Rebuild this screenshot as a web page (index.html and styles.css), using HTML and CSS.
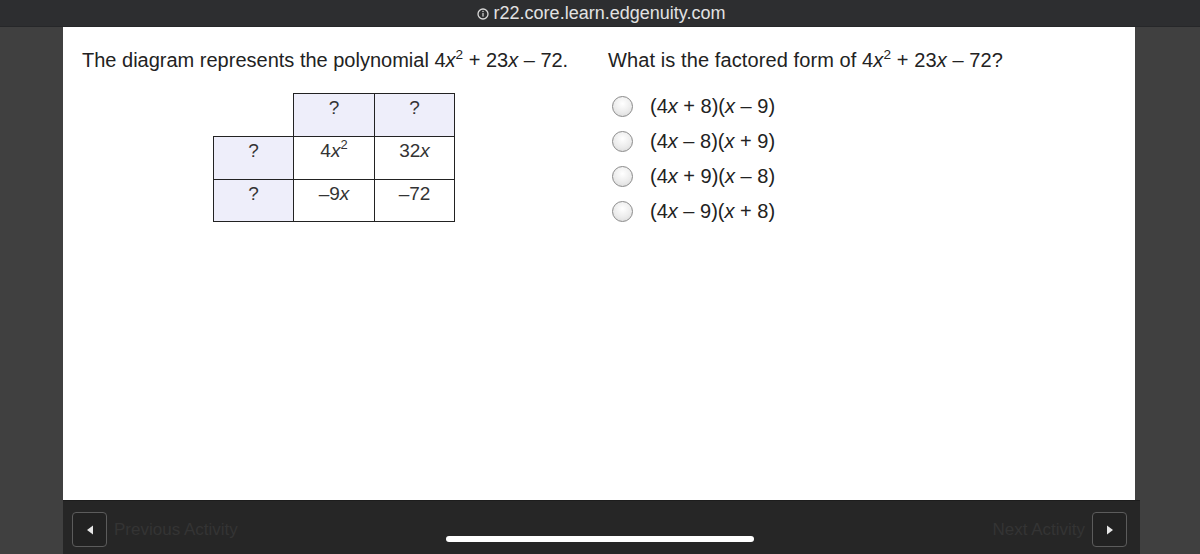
FILE: index.html
```html
<!DOCTYPE html>
<html>
<head>
<meta charset="utf-8">
<link rel="stylesheet" href="styles.css">
</head>
<body>
<div class="topbar">
  <span class="info-icon">
    <svg width="12" height="12" viewBox="0 0 12 12"><circle cx="6" cy="6" r="5" fill="none" stroke="#d8d8d8" stroke-width="1.3"/><rect x="5.4" y="5" width="1.2" height="3.6" fill="#d8d8d8"/><circle cx="6" cy="3.5" r="0.75" fill="#d8d8d8"/></svg>
  </span>
  <span class="url">r22.core.learn.edgenuity.com</span>
</div>
<div class="main">
  <div class="side"></div>
  <div class="center">
    <div class="content">
      <div class="left-col">
        <p class="prompt">The diagram represents the polynomial 4<i>x</i><sup>2</sup> + 23<i>x</i> – 72.</p>
        <div class="grid">
          <div class="cell empty"></div>
          <div class="cell head">?</div>
          <div class="cell head">?</div>
          <div class="cell head">?</div>
          <div class="cell">4<i>x</i><sup>2</sup></div>
          <div class="cell">32<i>x</i></div>
          <div class="cell head">?</div>
          <div class="cell">–9<i>x</i></div>
          <div class="cell">–72</div>
        </div>
      </div>
      <div class="right-col">
        <p class="prompt">What is the factored form of 4<i>x</i><sup>2</sup> + 23<i>x</i> – 72?</p>
        <ul class="options">
          <li><span class="radio"></span><span class="opt">(4<i>x</i> + 8)(<i>x</i> – 9)</span></li>
          <li><span class="radio"></span><span class="opt">(4<i>x</i> – 8)(<i>x</i> + 9)</span></li>
          <li><span class="radio"></span><span class="opt">(4<i>x</i> + 9)(<i>x</i> – 8)</span></li>
          <li><span class="radio"></span><span class="opt">(4<i>x</i> – 9)(<i>x</i> + 8)</span></li>
        </ul>
      </div>
    </div>
    <div class="footer">
      <div class="nav">
        <span class="navbtn"><svg width="8" height="10" viewBox="0 0 8 10"><path d="M7 0.5 L1 5 L7 9.5 Z" fill="#e6e6e6"/></svg></span>
        <span class="navtext">Previous Activity</span>
      </div>
      <div class="nav">
        <span class="navtext">Next Activity</span>
        <span class="navbtn"><svg width="8" height="10" viewBox="0 0 8 10"><path d="M1 0.5 L7 5 L1 9.5 Z" fill="#e6e6e6"/></svg></span>
      </div>
      <div class="home-indicator"></div>
    </div>
  </div>
  <div class="side right"></div>
</div>
</body>
</html>
```
FILE: styles.css
```css
* { box-sizing: border-box; }
html, body { margin: 0; padding: 0; }
body {
  width: 1200px;
  height: 554px;
  overflow: hidden;
  background: #414141;
  font-family: "Liberation Sans", Arial, sans-serif;
}
.topbar {
  height: 27px;
  background: #2d2e30;
  border-bottom: 1px solid #262729;
  display: flex;
  align-items: center;
  justify-content: center;
  gap: 5px;
  color: #e2e2e2;
  font-size: 18px;
  padding-left: 2px;
}
.info-icon { display: flex; align-items: center; margin-top: 1px; }
.main {
  display: flex;
  height: 527px;
}
.side {
  width: 63px;
  background: #404040;
}
.side.right { width: 60px; }
.center {
  flex: 1;
  display: flex;
  flex-direction: column;
}
.content {
  height: 473px;
  background: #ffffff;
  margin-right: 5px;
  display: flex;
  padding: 20px 0 0 19px;
  color: #222;
}
.prompt {
  margin: 0;
  font-size: 20px;
  line-height: 26px;
  white-space: nowrap;
}
.right-col .prompt { letter-spacing: 0.1px; }
.prompt sup, .cell sup {
  font-size: 0.68em;
  line-height: 0;
  vertical-align: 0.6em;
}
.left-col { width: 526px; }
.grid {
  margin: 20px 0 0 131px;
  display: grid;
  grid-template-columns: 80px 81px 80px;
  grid-template-rows: 43px 43px 42px;
  width: 242px;
}
.cell {
  border: 1px solid #222;
  margin: 0 -1px -1px 0;
  text-align: center;
  font-size: 19px;
  line-height: 20px;
  padding-top: 4px;
  color: #333;
}
.cell.head { background: #eeeefa; }
.cell.empty { border: none; }
.options {
  list-style: none;
  margin: 16px 0 0 0;
  padding: 0;
}
.options li {
  display: flex;
  align-items: center;
  height: 35px;
  font-size: 20px;
  color: #222;
}
.opt { white-space: pre; }
.radio {
  width: 21px;
  height: 21px;
  border-radius: 50%;
  border: 1px solid #8a8a8a;
  background: radial-gradient(circle at 50% 35%, #ffffff 0%, #ececec 55%, #d6d6d6 100%);
  margin: 0 17px 0 4px;
  flex: none;
}
.footer {
  flex: 1;
  background: #262626;
  display: flex;
  justify-content: space-between;
  align-items: center;
  padding: 0 13px 0 9px;
  position: relative;
  border-top: 1px solid #1d1d1d;
}
.nav {
  display: flex;
  align-items: center;
  gap: 7px;
  margin-top: 4px;
}
.navbtn {
  width: 35px;
  height: 35px;
  border: 1.5px solid #5c5c5c;
  border-radius: 4px;
  display: flex;
  align-items: center;
  justify-content: center;
  background: #222;
}
.navtext {
  color: #343434;
  font-size: 17px;
}
.home-indicator {
  position: absolute;
  left: 383px;
  top: 35px;
  width: 308px;
  height: 6px;
  border-radius: 3px;
  background: #ffffff;
}
```
